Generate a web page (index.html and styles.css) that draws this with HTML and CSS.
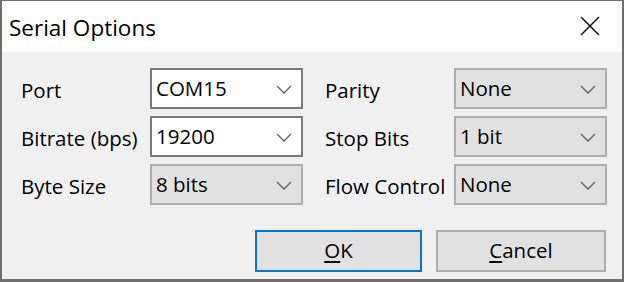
FILE: index.html
```html
<!DOCTYPE html>
<html lang="en">
<head>
  <meta charset="UTF-8"/>
  <title>Serial Options</title>
  <link rel="stylesheet" href="styles.css">
</head>
<body>

<div class="window">

  <div class="titlebar">
    <span class="title">Serial Options</span>
    <svg class="close" width="20" height="20" viewBox="0 0 20 20">
      <path d="M1 1 L19 19 M19 1 L1 19" stroke="#000" stroke-width="1.4" fill="none"/>
    </svg>
  </div>

  <div class="content">
    <div class="fields">
      <div class="label">Port</div>
      <div class="combo editable">COM15
        <svg class="arrow" width="16" height="9" viewBox="0 0 16 9"><polyline points="1,1 8,8 15,1" fill="none" stroke="#606060" stroke-width="1.3"/></svg>
      </div>
      <div class="label right">Parity</div>
      <div class="combo">None
        <svg class="arrow" width="16" height="9" viewBox="0 0 16 9"><polyline points="1,1 8,8 15,1" fill="none" stroke="#606060" stroke-width="1.3"/></svg>
      </div>

      <div class="label">Bitrate (bps)</div>
      <div class="combo editable">19200
        <svg class="arrow" width="16" height="9" viewBox="0 0 16 9"><polyline points="1,1 8,8 15,1" fill="none" stroke="#606060" stroke-width="1.3"/></svg>
      </div>
      <div class="label right">Stop Bits</div>
      <div class="combo">1 bit
        <svg class="arrow" width="16" height="9" viewBox="0 0 16 9"><polyline points="1,1 8,8 15,1" fill="none" stroke="#606060" stroke-width="1.3"/></svg>
      </div>

      <div class="label">Byte Size</div>
      <div class="combo">8 bits
        <svg class="arrow" width="16" height="9" viewBox="0 0 16 9"><polyline points="1,1 8,8 15,1" fill="none" stroke="#606060" stroke-width="1.3"/></svg>
      </div>
      <div class="label right">Flow Control</div>
      <div class="combo">None
        <svg class="arrow" width="16" height="9" viewBox="0 0 16 9"><polyline points="1,1 8,8 15,1" fill="none" stroke="#606060" stroke-width="1.3"/></svg>
      </div>
    </div>

    <div class="buttons">
      <button class="btn default"><u>O</u>K</button>
      <button class="btn cancel"><u>C</u>ancel</button>
    </div>
  </div>

</div>

</body>
</html>
```

FILE: styles.css
```css
* {
  box-sizing: border-box;
}

body {
  margin: 0;
  font-family: 'Open Sans', 'Noto Sans', sans-serif;
  color: #000;
  background: #6e6e6e;
}

.window {
  width: 624px;
  height: 282px;
  display: flex;
  flex-direction: column;
  border-style: solid;
  border-color: #6e6e6e;
  border-width: 1px 2px 3px 2px;
}

.titlebar {
  height: 51px;
  background: #fff;
  display: flex;
  align-items: center;
  justify-content: space-between;
  padding: 0 22px 0 7px;
}

.title {
  font-size: 22.5px;
  margin-top: 1px;
}

.close {
  display: block;
  margin-top: -2px;
}

.content {
  flex: 1;
  background: #f0f0f0;
  padding: 16px 14px 0 19px;
}

.fields {
  display: grid;
  grid-template-columns: 129px 153px 151px 153px;
  grid-auto-rows: 41px;
  row-gap: 7px;
}

.label {
  font-size: 20.5px;
  display: flex;
  align-items: center;
  padding-top: 2px;
  white-space: nowrap;
}

.label.right {
  padding-left: 22px;
}

.combo {
  font-size: 20.5px;
  display: flex;
  align-items: center;
  justify-content: space-between;
  padding: 0 9px 1px 4px;
  background: #e1e1e1;
  border: 2px solid #adadad;
}

.combo.editable {
  background: #fff;
  border-color: #7a7a7a;
}

.arrow {
  display: block;
  margin-top: 2px;
}

.buttons {
  display: flex;
  justify-content: flex-end;
  gap: 14px;
  margin-top: 25px;
  padding-right: 2px;
}

.btn {
  height: 42px;
  font-family: inherit;
  font-size: 20.5px;
  color: #000;
  background: #e1e1e1;
  border: 2px solid #adadad;
  padding: 0 0 2px;
}

.btn.default {
  width: 167px;
  border-color: #0078d7;
}

.btn.cancel {
  width: 170px;
}

.btn u {
  text-underline-offset: 3px;
}
```
